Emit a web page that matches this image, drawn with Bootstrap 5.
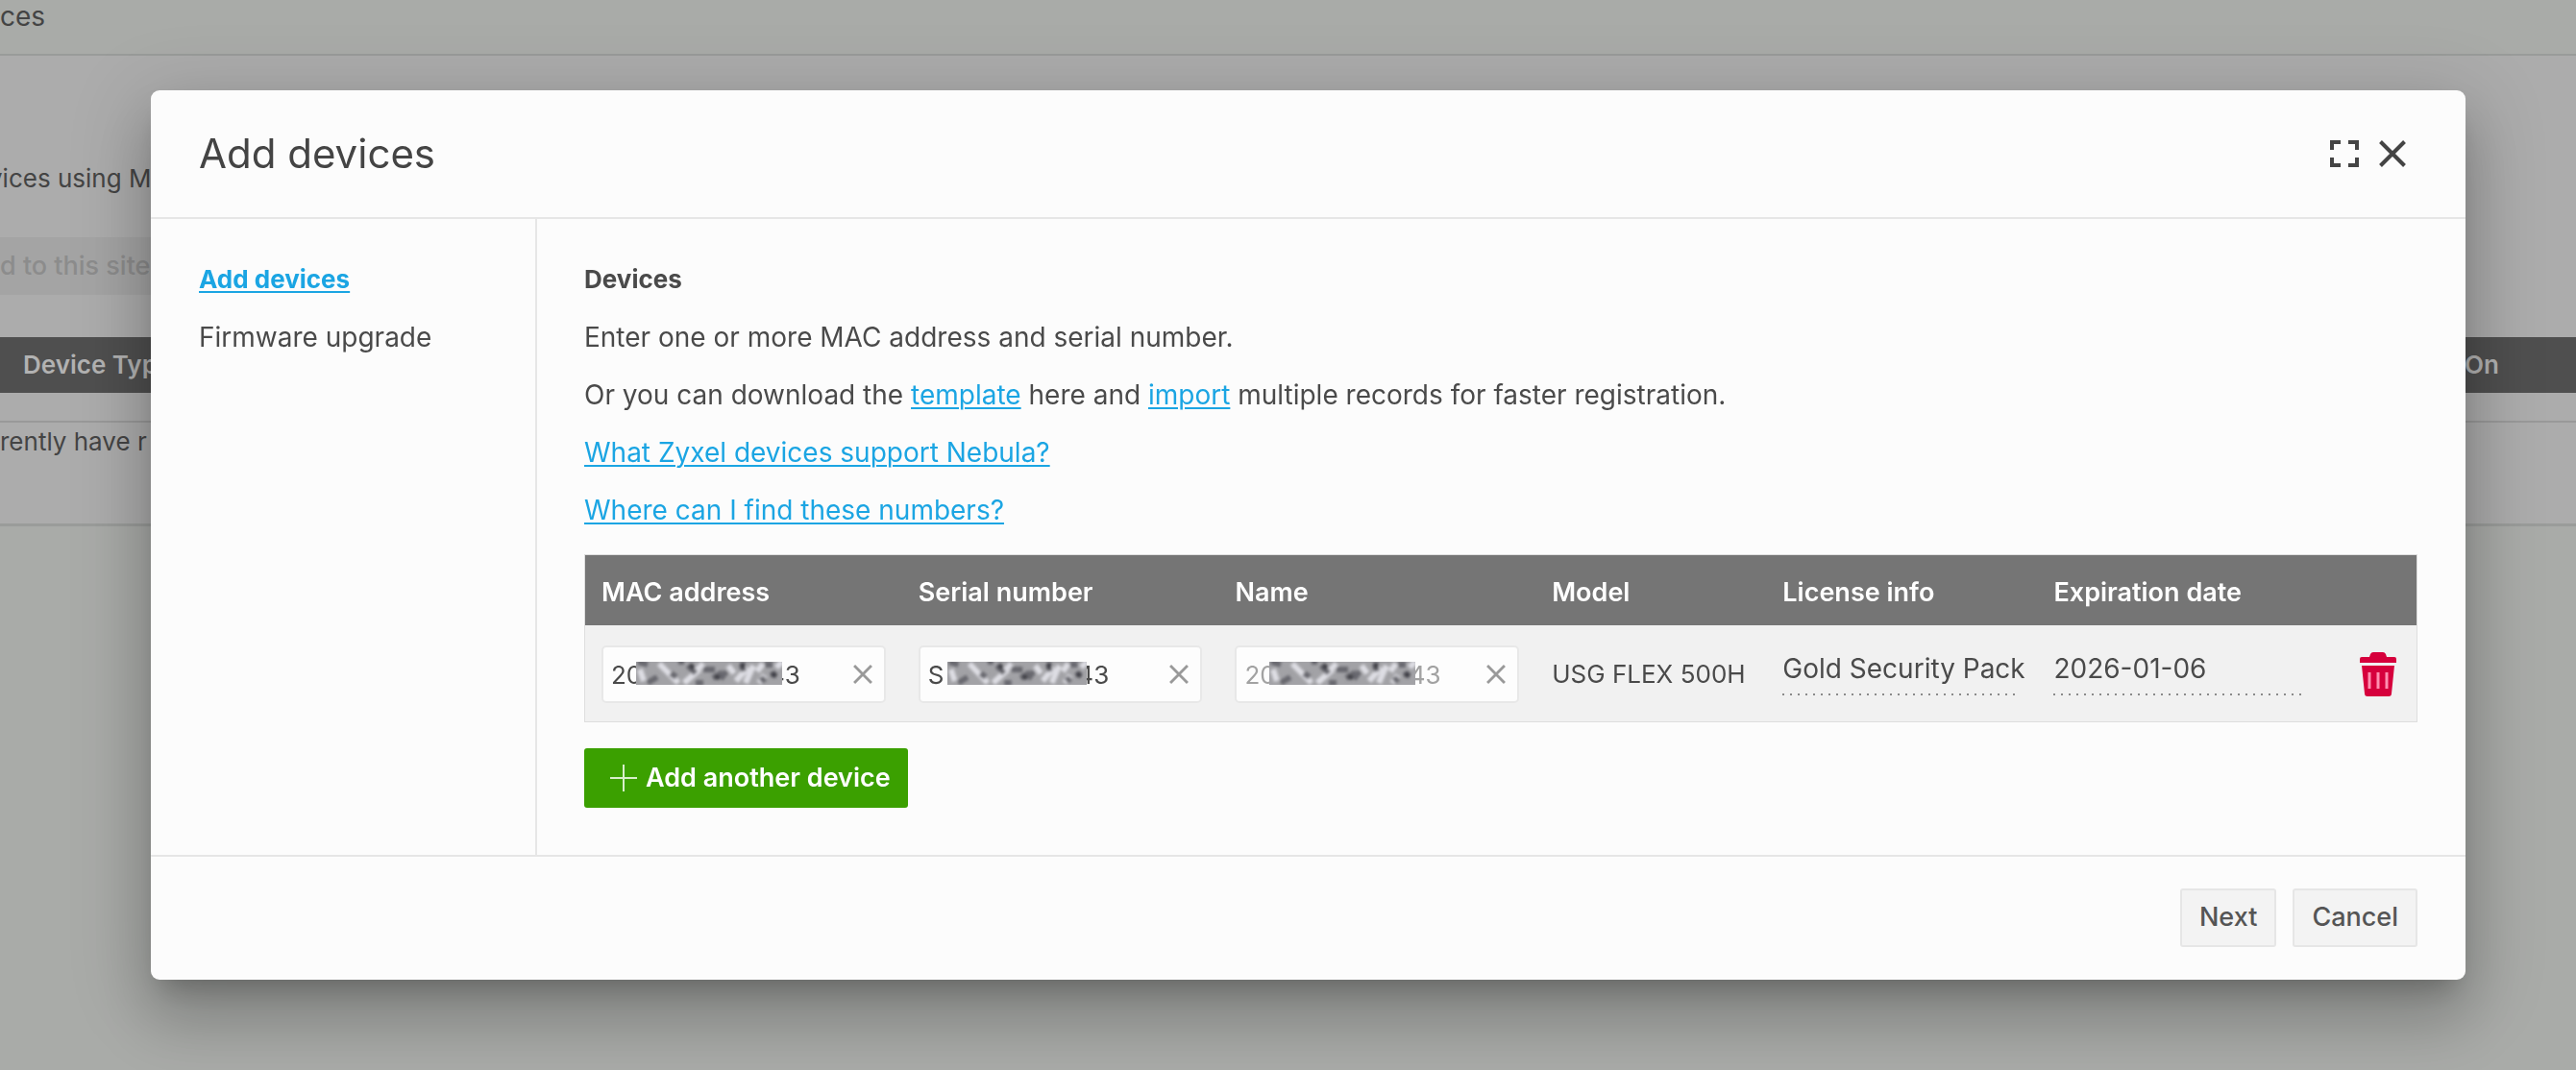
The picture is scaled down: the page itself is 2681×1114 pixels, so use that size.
<!DOCTYPE html>
<html lang="en">
<head>
<meta charset="utf-8">
<meta name="viewport" content="width=device-width, initial-scale=1">
<title>Add devices</title>
<link rel="stylesheet" href="https://cdn.jsdelivr.net/npm/bootstrap@5.3.0/dist/css/bootstrap.min.css">
<style>
  body { font-family: Inter, "Open Sans", sans-serif; font-size: 26px; line-height: 30px; color: #4a4a4a; background: #a9aba8; overflow: hidden; min-height: 100vh; }
  a { color: #1ba5e3; text-underline-offset: 3px; text-decoration-thickness: 2px; }

  /* dimmed page */
  .site-title { font-size: 28px; height: 58px; padding-top: 2px; border-bottom: 2px solid #999b99; color: #444; }
  .site-panel { background: #acacac; border-bottom: 3px solid #9a9c9a; color: #444; height: 490px; padding-top: 113px; white-space: nowrap; }
  .site-intro { margin: 0 0 46px -12px; }
  .site-action { background: #a4a4a4; color: #8c8c8c; font-size: 27px; font-weight: 500; height: 60px; width: 400px; border: 0; padding: 0; text-align: left; display: block; margin-bottom: 44px; }
  .site-cols { background: #4f4f4f; color: #b2b2b2; font-weight: 600; height: 58px; padding: 0 80px 0 24px; }
  .site-empty { border-top: 2px solid #999; margin-top: 29px; padding-top: 5px; }

  /* dialog */
  .device-dialog { max-width: none; margin: 94px 115px 0 157px; }
  .device-dialog .modal-content { background: #fcfcfc; color: inherit; border: 0; border-radius: 9px; box-shadow: 0 19px 26px -12px rgba(0,0,0,.22), 0 41px 65px 5px rgba(0,0,0,.16), 0 16px 78px 14px rgba(0,0,0,.13); }
  .device-dialog .modal-header { height: 134px; padding: 0 62px 0 50px; border-bottom: 2px solid #e6e6e6; }
  .device-dialog .modal-title { font-size: 42px; line-height: 46px; font-weight: 400; color: #444; }
  .glyph-btn { border: 0; padding: 0; background: none; color: #444; line-height: 0; }
  .header-tools { gap: 20px; }
  .steps { width: 402px; flex: none; padding: 48px 50px; border-right: 2px solid #e6e6e6; }
  .steps a { display: block; margin-bottom: 30px; }
  .pane { padding: 48px 50px 49px 49px; flex: 1 1 0; min-width: 0; }
  .pane p, .pane h2 { margin: 0 0 30px; line-height: 30px; }
  .pane h2 { font-size: 26px; }
  .pane p, .steps-next, .dotted { font-size: 28px; }

  .device-table { table-layout: fixed; width: 100%; margin: 31px 0 27px; border: 1px solid #dedede; border-collapse: separate; border-spacing: 0; }
  .device-table th { background: #757575; color: #fff; font-size: 27px; font-weight: 600; height: 73px; padding: 4px 17px 0; }
  .device-table td { background: #f1f1f1; height: 100px; padding: 2px 17px 0; white-space: nowrap; }
  .field { position: relative; }
  .field input { width: 100%; height: 60px; border: 2px solid #e8e8e8; border-radius: 5px; background: #fdfdfd; color: #4a4a4a; padding: 0 50px 0 8px; font-size: 26px; }
  .field input::placeholder { color: #a2a2a2; opacity: 1; }
  .field button { position: absolute; right: 14px; top: 20px; color: #999; }
  .field .redacted { position: absolute; left: 36px; top: 17px; }
  .field .redacted-serial { left: 30px; }
  .dotted { height: 43px; background: repeating-linear-gradient(90deg, #8a8a8a 0 2px, transparent 2px 8px) left bottom / 100% 2px no-repeat; }
  .btn-add { background: #3ba000; color: #fff; border: 0; border-radius: 3px; height: 62px; padding: 0 18px 0 26px; font-weight: 600; font-size: 27px; }
  .btn-add:hover { background: #338c00; color: #fff; }
  .device-dialog .modal-footer { padding: 33px 50px 34px; gap: 17px; border-top: 2px solid #e6e6e6; }
  .device-dialog .modal-footer > * { margin: 0; }
  .btn-plain { background: #f3f3f3; color: #555; border: 2px solid #e6e6e6; border-radius: 3px; height: 61px; padding: 0 18px; font-weight: 500; font-size: 27px; }
</style>
<script src="https://cdn.jsdelivr.net/npm/bootstrap@5.3.0/dist/js/bootstrap.bundle.min.js"></script>
</head>
<body>
<svg width="0" height="0" class="position-absolute" aria-hidden="true">
  <defs>
    <filter id="soft" x="-10%" y="-10%" width="120%" height="120%"><feGaussianBlur stdDeviation="1.5"/></filter>
    <symbol id="mosaic" viewBox="0 0 152 24" preserveAspectRatio="none">
      <rect width="152" height="24" fill="#a2a2a6"/>
      <g filter="url(#soft)" stroke-width="6" fill="none">
        <path stroke="#dedee4" d="M4 8l4 12M24 2l20 20M50 22l16-14M70 2l-8 8M104 20l12-14M114 22l8-18M132 2l-6 8M146 6l6-6M128 22l6-8M96 4l6 8"/>
        <path stroke="#68686e" d="M2 0l10 3M12 22l10-6M44 0h6M54 4l8 8M36 12l6 4M62 22h8M80 17l10-6M88 18l6-8M110 2l2 8M134 3h8M140 14l6-2M130 16l4 5M70 8h12"/>
        <path stroke="#3f3f46" stroke-width="5" d="M56 3l4 4M82 15l5 2M111 1v6M141 12l5 3"/>
      </g>
    </symbol>
    <symbol id="cross" viewBox="0 0 28 28"><path d="M1.500 1.500l25 25M26.500 1.500l-25 25" fill="none" stroke="currentColor" stroke-width="4"/></symbol>
  </defs>
</svg>

<div class="site-title">ces</div>
<main class="site-panel">
  <p class="site-intro">vices using M</p>
  <button class="site-action" type="button" disabled>d to this site</button>
  <div class="site-cols d-flex align-items-center justify-content-between"><span>Device Typ</span><span>On</span></div>
  <div class="site-empty">rently have r</div>
</main>

<div class="modal d-block" role="dialog" aria-labelledby="dlg-title">
  <div class="modal-dialog device-dialog">
    <div class="modal-content">
      <div class="modal-header d-flex justify-content-between align-items-center">
        <h1 class="modal-title" id="dlg-title">Add devices</h1>
        <div class="header-tools d-flex align-items-center">
          <button class="glyph-btn" type="button" aria-label="Full screen"><svg width="32" height="28" viewBox="0 0 32 28" fill="none" stroke="currentColor" stroke-width="4"><path d="M3 10V2h9M20 2h9v8M29 18v8h-9M12 26H3v-8"/></svg></button>
          <button class="glyph-btn" type="button" aria-label="Close"><svg width="28" height="28"><use href="#cross"/></svg></button>
        </div>
      </div>
      <div class="modal-body p-0 d-flex">
        <nav class="steps">
          <a class="fw-bold" href="#">Add devices</a>
          <a class="steps-next text-reset text-decoration-none" href="#">Firmware upgrade</a>
        </nav>
        <section class="pane">
          <h2 class="fw-bold">Devices</h2>
          <p>Enter one or more MAC address and serial number.</p>
          <p>Or you can download the <a href="#">template</a> here and <a href="#">import</a> multiple records for faster registration.</p>
          <p><a href="#">What Zyxel devices support Nebula?</a></p>
          <p><a href="#">Where can I find these numbers?</a></p>
          <table class="device-table">
            <colgroup><col style="width:17.3%"><col style="width:17.3%"><col style="width:17.3%"><col style="width:12.6%"><col style="width:14.8%"><col style="width:15.5%"><col></colgroup>
            <thead>
              <tr><th>MAC address</th><th>Serial number</th><th>Name</th><th>Model</th><th>License info</th><th>Expiration date</th><th></th></tr>
            </thead>
            <tbody>
              <tr>
                <td><div class="field"><input type="text" aria-label="MAC address" value="20                  43"><svg class="redacted" width="152" height="24"><use href="#mosaic"/></svg><button class="glyph-btn" type="button" aria-label="Clear MAC address"><svg width="20" height="20"><use href="#cross"/></svg></button></div></td>
                <td><div class="field"><input type="text" aria-label="Serial number" value="S                   43"><svg class="redacted redacted-serial" width="145" height="24"><use href="#mosaic"/></svg><button class="glyph-btn" type="button" aria-label="Clear serial number"><svg width="20" height="20"><use href="#cross"/></svg></button></div></td>
                <td><div class="field"><input type="text" aria-label="Name" placeholder="20                   43"><svg class="redacted" width="152" height="24"><use href="#mosaic"/></svg><button class="glyph-btn" type="button" aria-label="Clear name"><svg width="20" height="20"><use href="#cross"/></svg></button></div></td>
                <td>USG FLEX 500H</td>
                <td><div class="dotted">Gold Security Pack</div></td>
                <td><div class="dotted">2026-01-06</div></td>
                <td><div class="d-flex justify-content-end pe-1"><button class="glyph-btn" type="button" aria-label="Delete device"><svg width="38" height="46" viewBox="0 0 38 46"><path fill="#d6003c" d="M0 11V7q0-2 2-2h8l1-3q1-2 3-2h10q2 0 3 2l1 3h8q2 0 2 2v4zM2 14h34l-3 29q0 3-3 3H8q-3 0-3-3z"/><path d="M10 21v17M19 21v17M28 21v17" stroke="#ff8fb0" stroke-width="3"/></svg></button></div></td>
              </tr>
            </tbody>
          </table>
          <button class="btn btn-add d-inline-flex align-items-center gap-2" type="button"><svg width="30" height="30" viewBox="0 0 30 30"><path d="M15 1v28M1 15h28" stroke="#d8efca" stroke-width="2"/></svg>Add another device</button>
        </section>
      </div>
      <div class="modal-footer">
        <button class="btn btn-plain" type="button">Next</button>
        <button class="btn btn-plain" type="button">Cancel</button>
      </div>
    </div>
  </div>
</div>
</body>
</html>
